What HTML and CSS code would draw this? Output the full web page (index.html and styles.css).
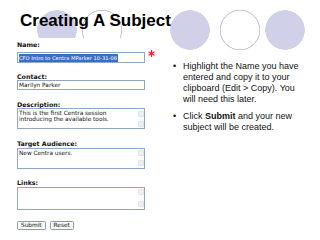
FILE: index.html
```html
<!DOCTYPE html>
<html>
<head>
<meta charset="utf-8">
<link rel="stylesheet" href="styles.css">
</head>
<body>
<h1 class="title">Creating A Subject</h1>
<div class="content">
  <div class="form">
    <div class="label">Name:</div>
    <div class="row name-row">
      <div class="input name-input"><span class="sel">CFO Intro to Centra MParker 10-31-06</span></div>
      <svg class="req" width="7" height="7" viewBox="0 0 7 7"><g stroke="#e8222a" stroke-width="1.3" stroke-linecap="round"><line x1="3.5" y1="0.6" x2="3.5" y2="6.4"/><line x1="1" y1="2" x2="6" y2="5"/><line x1="1" y1="5" x2="6" y2="2"/></g></svg>
    </div>
    <div class="label l-contact">Contact:</div>
    <div class="input contact-input">Marilyn Parker</div>
    <div class="label l-desc">Description:</div>
    <div class="ta">
      <div class="ta-text">This is the first Centra session<br>introducing the available tools.</div>
      <div class="sb"><i class="arr"></i><i class="arr"></i></div>
    </div>
    <div class="label l-target">Target Audience:</div>
    <div class="ta">
      <div class="ta-text">New Centra users.</div>
      <div class="sb"><i class="arr"></i><i class="arr"></i></div>
    </div>
    <div class="label l-links">Links:</div>
    <div class="ta ta-links">
      <div class="ta-text"></div>
      <div class="sb"><i class="arr"></i><i class="arr"></i></div>
    </div>
    <div class="buttons">
      <span class="btn">Submit</span>
      <span class="btn">Reset</span>
    </div>
  </div>
  <ul class="bullets">
    <li><span class="dot">•</span><span class="txt">Highlight the Name you have entered and copy it to your clipboard (Edit &gt; Copy). You will need this later.</span></li>
    <li><span class="dot">•</span><span class="txt">Click <b>Submit</b> and your new subject will be created.</span></li>
  </ul>
</div>
</body>
</html>
```
FILE: styles.css
```css
* { box-sizing: border-box; margin: 0; padding: 0; }
html { background: #fff; }
html, body { width: 320px; height: 240px; overflow: hidden; }
body {
  font-family: "Liberation Sans", Arial, sans-serif; color: #000;
  background:
    radial-gradient(circle at 57px 30px, #d0d0e9 19.5px, rgba(208,208,233,0) 20px),
    radial-gradient(circle at 102px 30px, rgba(200,200,228,0) 19px, #c8c8e4 19.4px, #c8c8e4 20px, rgba(200,200,228,0) 20.5px),
    radial-gradient(circle at 190px 30px, #d0d0e9 19.5px, rgba(208,208,233,0) 20px),
    radial-gradient(circle at 240px 30px, rgba(200,200,228,0) 19px, #c8c8e4 19.4px, #c8c8e4 20px, rgba(200,200,228,0) 20.5px),
    radial-gradient(circle at 285px 30px, #d0d0e9 19.5px, rgba(208,208,233,0) 20px),
    #fff;
  background-repeat: no-repeat;
}

.title { height: 38px; padding: 12px 0 0 20px; font-size: 17px; line-height: 17px; font-weight: bold; }

.content { display: flex; }

.form { width: 160px; height: 202px; background: #fff; padding: 2.5px 0 0 17px; font-family: "DejaVu Sans", Verdana, sans-serif; color: #111; }
.label { font-size: 6.3px; font-weight: bold; line-height: 7px; height: 7px; white-space: nowrap; }
.l-contact { margin-top: 9.5px; }
.l-desc { margin-top: 10.5px; }
.l-target { margin-top: 11px; }
.l-links { margin-top: 10.5px; }

.row { display: flex; align-items: flex-start; }
.name-row { margin-top: 4.5px; }
.input { width: 128px; border: 1px solid #8fa8c8; font-size: 5.8px; white-space: nowrap; overflow: hidden; padding-left: 1px; }
.name-input { height: 11px; line-height: 9px; font-size: 5.2px; }
.sel { display: inline-block; background: #3a6cc8; color: #fff; height: 8px; margin-top: 0.5px; line-height: 8px; padding-right: 0.5px; }
.req { margin: -2px 0 0 3px; }
.contact-input { height: 10px; line-height: 8px; margin-top: 0.5px; }

.ta { display: flex; width: 128px; height: 21px; border: 1px solid #8fa8c8; margin-top: 0.5px; }
.ta-links { height: 23px; }
.ta-text { flex: 1; font-size: 5.8px; line-height: 6px; padding: 1px 0 0 1px; white-space: nowrap; overflow: hidden; }
.sb { width: 6px; display: flex; flex-direction: column; justify-content: space-between; padding: 1.5px 0.5px 1.5px 0; background: #fbfbfb; }
.arr { display: block; height: 6px; background: #eef0f3; border: 1px solid #dfe3ea; border-radius: 1px; }

.buttons { display: flex; gap: 4px; margin-top: 11px; }
.btn { display: block; height: 9px; border: 1px solid #8a9ab4; border-radius: 1.5px; background: #f4f4f1; box-shadow: inset 0 0 0 0.5px #fff; font-size: 5.8px; line-height: 7px; padding: 0 3px; color: #222; }

.bullets { list-style: none; margin-left: 13px; padding-top: 23px; display: flex; flex-direction: column; gap: 6px; font-size: 9px; line-height: 11px; color: #111; }
.bullets li { display: flex; }
.dot { width: 10px; flex: none; }
.txt { width: 122px; }
.txt b { font-weight: bold; }
```
